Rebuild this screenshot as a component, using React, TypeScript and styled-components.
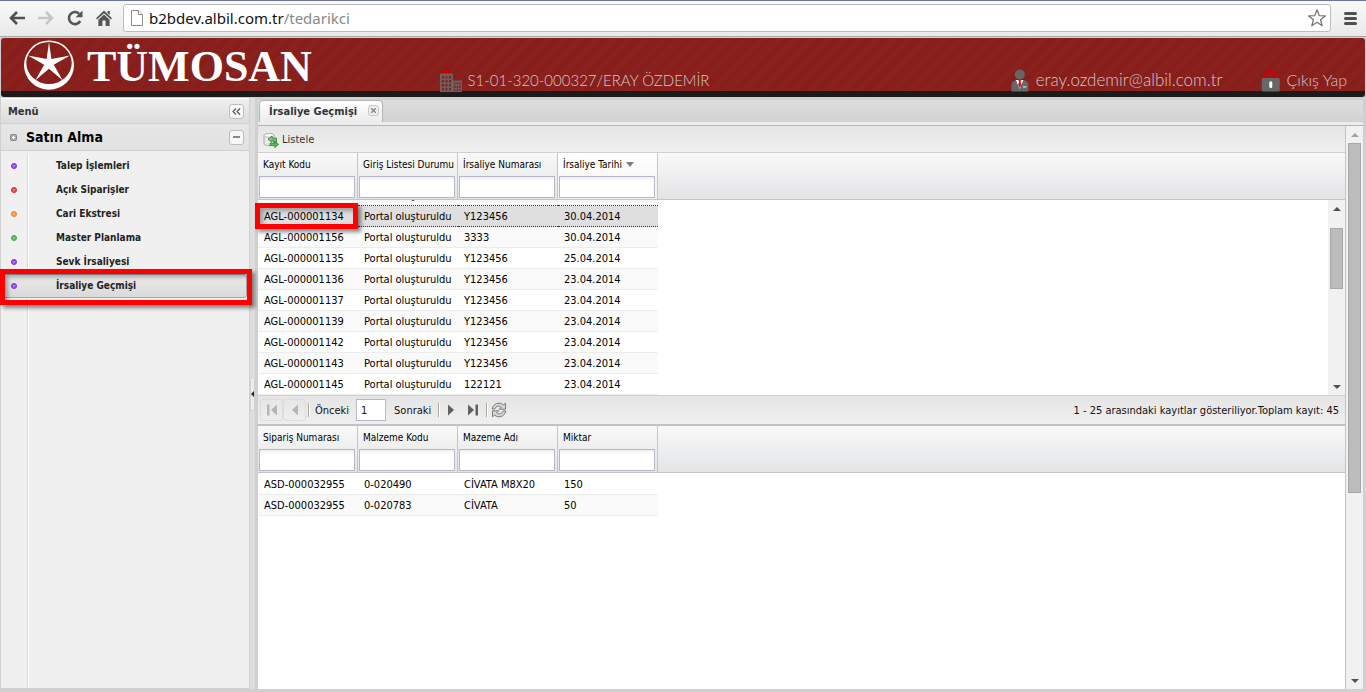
import React from "react";
import styled, { createGlobalStyle } from "styled-components";

const uiFont = `Tahoma, "DejaVu Sans Condensed", "DejaVu Sans", sans-serif`;

const GlobalStyle = createGlobalStyle`
  *, *::before, *::after { box-sizing: border-box; }
  html, body, #root { height: 100%; margin: 0; }
  body { background: #d0d0d0; color: #111; font: 11px/14px ${uiFont}; }
  button, input { font: inherit; color: inherit; margin: 0; padding: 0; }
  button { border: 0; background: none; }
  svg { display: block; flex: none; }
`;

const Page = styled.div`
  display: flex;
  flex-direction: column;
  min-height: 100%;
`;

/* Browser bar */
const BrowserBar = styled.div`
  display: flex;
  align-items: center;
  height: 37px;
  padding: 0 8px 1px;
  border-top: 1px solid #6a74a4;
  border-bottom: 1px solid #a9a9a9;
  background: linear-gradient(#f9f9f9, #e9e9e9);
`;

const NavButtons = styled.div`
  display: flex;
  gap: 11px;
  margin-right: 10px;
`;

const IconButton = styled.button`
  display: flex;
  align-items: center;
  justify-content: center;
`;

const AddressBox = styled.div`
  display: flex;
  flex: 1;
  align-items: center;
  gap: 5px;
  height: 28px;
  padding: 0 3px 0 6px;
  border: 1px solid #bcbcbc;
  border-radius: 3px;
  background: #fff;
`;

const Address = styled.div`
  flex: 1;
  color: #888;
  font: 15px/24px "Segoe UI", "Noto Sans", "Open Sans", sans-serif;
`;

const Host = styled.span`
  color: #111;
`;

const MenuButton = styled(IconButton)`
  margin-left: 13px;
`;

/* Banner */
const Banner = styled.header`
  display: grid;
  grid-template-columns: 32.5% 1fr auto;
  height: 59px;
  margin: 1px;
  padding: 0 18px 0 3px;
  border-bottom: 6px solid #1c1a1a;
  border-radius: 3px;
  background:
    repeating-linear-gradient(135deg, rgba(255, 255, 255, 0.04) 0 1px, transparent 1px 2px),
    #861b18;
`;

const Brand = styled.div`
  display: flex;
  align-items: center;
  gap: 12px;
  padding-left: 19px;
`;

const BrandName = styled.div`
  padding-top: 4px;
  color: #fff;
  font: bold 44px/50px "Liberation Serif", "Times New Roman", serif;
`;

const BannerGroup = styled.div`
  display: flex;
  align-items: flex-end;
  gap: 38px;
`;

const BannerItem = styled.div<{ $size: number }>`
  display: flex;
  align-items: flex-end;
  gap: 5px;
  color: #d3c6c4;
  font: 300 ${(p) => p.$size}px/24px "Century Gothic", Lato, sans-serif;
  white-space: nowrap;
`;

const BannerLink = styled.a`
  display: flex;
  align-items: flex-end;
  gap: 6px;
  color: #d3c6c4;
  font: 300 16px/24px "Century Gothic", Lato, sans-serif;
  text-decoration: none;
  white-space: nowrap;
`;

/* Work area */
const Workspace = styled.div`
  display: flex;
  flex: 1;
  padding: 0 3px 3px 0;
`;

const Sidebar = styled.aside`
  display: flex;
  flex: none;
  flex-direction: column;
  width: 250px;
  border: 1px solid #d0d0d0;
  border-top: 0;
  background: #f0f0f0;
`;

const SideHeader = styled.div`
  display: flex;
  align-items: center;
  justify-content: space-between;
  height: 26px;
  padding: 1px 5px 0 7px;
  border-top: 1px solid #fff;
  border-bottom: 1px solid #d0d0d0;
  background: linear-gradient(#efefef, #dcdcdc);
  color: #333;
  font-weight: bold;
`;

const SideGroup = styled.div`
  display: flex;
  align-items: center;
  height: 27px;
  padding: 0 5px 0 9px;
  border-bottom: 1px solid #d0d0d0;
  background: linear-gradient(#e6e6e6, #e2e2e2);
`;

const GroupTitle = styled.div`
  flex: 1;
  padding-left: 9px;
  color: #000;
  font: bold 14px/18px ${uiFont};
`;

const ToolButton = styled.button`
  display: flex;
  align-items: center;
  justify-content: center;
  width: 15px;
  height: 15px;
  border: 1px solid #bdbdbd;
  border-radius: 3px;
  background: #f7f7f7;
`;

const SideMenu = styled.nav`
  flex: 1;
  margin-top: 3px;
  background: linear-gradient(90deg, transparent 26px, #dcdcdc 26px 27px, #fff 27px 28px, transparent 28px);
`;

const SideLink = styled.a<{ $selected?: boolean }>`
  position: relative;
  display: flex;
  align-items: center;
  gap: 39px;
  height: 24px;
  margin: 0 2px;
  padding-left: 7px;
  border: 1px solid ${(p) => (p.$selected ? "#a8a8a8" : "transparent")};
  border-radius: 3px;
  background: ${(p) => (p.$selected ? "linear-gradient(#eaeaea, #dadada)" : "none")};
  color: #222;
  font: bold 10px/14px ${uiFont};
  text-decoration: none;
`;

const Bullet = styled.span<{ $color: string }>`
  width: 6px;
  height: 6px;
  border: 1px solid ${(p) => p.$color};
  border-radius: 3px;
  background: radial-gradient(#ffffff70, transparent), ${(p) => p.$color};
`;

/* Red annotation frames lie over the page */
const Highlight = styled.div`
  position: absolute;
  z-index: 2;
  border: 5px solid #fe0000;
  box-shadow: 3px 3px 4px rgba(0, 0, 0, 0.45), inset 3px 3px 4px rgba(0, 0, 0, 0.3);
  pointer-events: none;
`;

const MenuHighlight = styled(Highlight)`
  inset: -6px -6px -8px -4px;
`;

const CellHighlight = styled(Highlight)`
  top: 3px;
  left: -3px;
  width: 103px;
  height: 26px;
`;

const Splitter = styled.div`
  display: flex;
  flex: none;
  align-items: center;
  width: 5px;
  background: #dedede;
`;

const SplitterHandle = styled.button`
  display: flex;
  align-items: center;
  justify-content: center;
  width: 5px;
  height: 34px;
  border: 1px solid #d0d0d0;
  border-radius: 3px;
  background: #ececec;
`;

const MainPanel = styled.main`
  display: flex;
  flex: 1;
  flex-direction: column;
  min-width: 0;
  border-left: 3px solid #d0d0d0;
`;

const TabStrip = styled.div`
  display: flex;
  align-items: flex-end;
  height: 25px;
  margin-top: 2px;
  padding-left: 1px;
  border-bottom: 3px solid #ececec;
  background: linear-gradient(#dedede, #d2d2d2);
`;

const Tab = styled.div`
  display: flex;
  align-items: center;
  gap: 11px;
  height: 22px;
  padding: 1px 3px 0 9px;
  border: 1px solid #b5b5b5;
  border-bottom: 0;
  border-radius: 4px 4px 0 0;
  background: linear-gradient(#fff, #ececec);
  color: #333;
  font-weight: bold;
`;

const CloseTab = styled.button`
  display: flex;
  align-items: center;
  justify-content: center;
  width: 11px;
  height: 11px;
  margin-bottom: 4px;
  border: 1px solid #c8c8c8;
  border-radius: 3px;
  background: #eee;
`;

const Content = styled.div`
  display: flex;
  flex: 1;
  border-top: 1px solid #bdb1b3;
  background: #fff;
`;

const GridColumn = styled.div`
  display: flex;
  flex: 1;
  flex-direction: column;
  min-width: 0;
  border-right: 1px solid #c8c2c3;
`;

const Toolbar = styled.div`
  display: flex;
  align-items: center;
  height: 27px;
  padding: 1px 0 0 5px;
  border-bottom: 1px solid #d0d0d0;
  background: linear-gradient(#e5e5e5, #efefef);
`;

const ToolbarButton = styled.button`
  display: flex;
  align-items: center;
  gap: 3px;
  color: #333;
`;

const HeaderBand = styled.div`
  height: 47px;
  border-bottom: 1px solid #c5c5c5;
  background: linear-gradient(#f9f9f9, #e3e4e6);
`;

const DataTable = styled.table`
  width: 400px;
  flex: none;
  border-collapse: separate;
  border-spacing: 0;
  table-layout: fixed;
`;

const HeadCell = styled.th<{ $sorted?: boolean }>`
  height: 46px;
  padding: 0 2px 1px 1px;
  border-right: 1px solid #c5c5c5;
  background: ${(p) => (p.$sorted ? "linear-gradient(#fff, #f3f3f3)" : "none")};
  color: #000;
  font-weight: normal;
  text-align: left;
  vertical-align: top;
  white-space: nowrap;
`;

const HeadLabel = styled.div`
  display: flex;
  align-items: center;
  gap: 4px;
  height: 23px;
  padding-left: 4px;
  font-size: 10px;
`;

const FilterInput = styled.input`
  display: block;
  width: 100%;
  height: 22px;
  padding: 0 4px;
  border: 1px solid #b5b8c8;
  border-radius: 0;
  background: linear-gradient(#eee, #fff 4px);
`;

const GridBody = styled.div`
  position: relative;
  display: flex;
`;

const RowWindow = styled.div`
  display: flex;
  flex: 1;
  flex-direction: column;
  justify-content: flex-end;
  height: 195px;
  overflow: hidden;
`;

const DetailRows = styled.div`
  padding-top: 1px;
`;

const Row = styled.tr<{ $selected?: boolean; $alt?: boolean }>`
  background: ${(p) => (p.$selected ? "#dfdfdf" : p.$alt ? "#fafafa" : "#fff")};
  td {
    border-bottom: 1px ${(p) => (p.$selected ? "dotted #333" : "solid #ededed")};
  }
  &:has(+ tr[aria-selected="true"]) td {
    border-bottom: 1px dotted #333;
  }
`;

const Cell = styled.td`
  height: 21px;
  padding: 2px 0 0 6px;
  overflow: hidden;
  color: #000;
  white-space: nowrap;
`;

const Pager = styled.div`
  display: flex;
  align-items: center;
  height: 31px;
  padding: 0 6px 0 2px;
  border-top: 1px solid #d0d0d0;
  border-bottom: 2px solid #c9bfc1;
  background: linear-gradient(#e5e5e5, #efefef);
`;

const PageButton = styled.button`
  display: flex;
  align-items: center;
  justify-content: center;
  width: 22px;
  height: 22px;
  border: 1px solid transparent;
  border-radius: 3px;

  &:disabled {
    width: 23px;
    border-color: #dcdcdc;
  }
`;

const Separator = styled.span`
  width: 2px;
  height: 14px;
  margin-left: 2px;
  border-left: 1px solid #aca899;
  border-right: 1px solid #fff;
`;

const PageInput = styled.input`
  width: 30px;
  height: 22px;
  margin: 0 3px 0 2px;
  padding: 0 4px;
  border: 1px solid #b5b8c8;
  background: #fff;
`;

const PagerText = styled.label`
  padding: 2px 5px 0;
`;

const PagerInfo = styled.div`
  flex: 1;
  padding-top: 2px;
  text-align: right;
`;

/* Scroll bars */
const ScrollTrack = styled.div`
  display: flex;
  flex: none;
  flex-direction: column;
  width: 17px;
  background: #f1f1f1;
`;

const ScrollButton = styled.button`
  display: flex;
  align-items: center;
  justify-content: center;
  height: 17px;
`;

const Gap = styled.div<{ $share: number }>`
  flex: ${(p) => p.$share} 1 0;
`;

const Thumb = styled.div<{ $share: number }>`
  flex: ${(p) => p.$share} 1 0;
  margin: 0 2px;
  border: 1px solid #a8a8a8;
  background: #bcbcbc;
`;

type ScrollProps = { before: number; size: number; after: number; atTop?: boolean };

function ScrollBar({ before, size, after, atTop }: ScrollProps) {
  return (
    <ScrollTrack>
      <ScrollButton aria-label="Yukarı kaydır">
        <svg width="8" height="4" viewBox="0 0 8 4">
          <path d="M0 4L4 0L8 4Z" fill={atTop ? "#a3a3a3" : "#505050"} />
        </svg>
      </ScrollButton>
      <Gap $share={before} />
      <Thumb $share={size} />
      <Gap $share={after} />
      <ScrollButton aria-label="Aşağı kaydır">
        <svg width="8" height="4" viewBox="0 0 8 4">
          <path d="M0 0L4 4L8 0Z" fill="#505050" />
        </svg>
      </ScrollButton>
    </ScrollTrack>
  );
}

/* Drawings */
const BackIcon = ({ color }: { color: string }) => (
  <svg width="18" height="18" viewBox="0 0 18 18" fill="none" stroke={color} strokeWidth="2.6">
    <path d="M17 9H4M9 3L3 9L9 15" />
  </svg>
);

const ForwardIcon = () => (
  <svg width="18" height="18" viewBox="0 0 18 18" fill="none" stroke="#c6c6c6" strokeWidth="2.6">
    <path d="M1 9H14M9 3L15 9L9 15" />
  </svg>
);

const ReloadIcon = () => (
  <svg width="18" height="18" viewBox="0 0 18 18">
    <path d="M14.2 12A6 6 0 1 1 13.2 4.8" fill="none" stroke="#555" strokeWidth="2.6" />
    <path d="M16.5 1.5V8.2H9.6Z" fill="#555" />
  </svg>
);

const HomeIcon = () => (
  <svg width="18" height="18" viewBox="0 0 18 18" fill="#555">
    <path d="M9 1.5L17 9.3L15.9 10.6L9 4.2L2.1 10.6L1 9.3Z" />
    <path d="M12.5 2H14.8V6L12.5 4Z" />
    <path d="M9 5.5L14.6 10.7V17H10.6V11.5H7.4V17H3.4V10.7Z" />
  </svg>
);

const PageIcon = () => (
  <svg width="14" height="18" viewBox="0 0 14 18" fill="#fff" stroke="#8c8c8c">
    <path d="M1.5 1.5H8.5L12.5 5.5V16.5H1.5Z" />
    <path d="M8.5 1.5V5.5H12.5" />
  </svg>
);

const StarIcon = () => (
  <svg width="20" height="20" viewBox="0 0 20 20" fill="#fff" stroke="#777" strokeWidth="1.3" strokeLinejoin="round">
    <path d="M10 1.8L12.2 7.6L18.3 7.9L13.5 11.7L15.2 17.7L10 14.3L4.8 17.7L6.5 11.7L1.7 7.9L7.8 7.6Z" />
  </svg>
);

const BurgerIcon = () => (
  <svg width="14" height="13" viewBox="0 0 14 13" stroke="#505050" strokeWidth="3" strokeLinecap="round">
    <path d="M1.5 1.5H11.5M1.5 6.5H11.5M1.5 11.5H11.5" />
  </svg>
);

const LogoMark = () => (
  <svg width="52" height="52" viewBox="0 0 52 52">
    <path
      fill="#fff"
      fillRule="evenodd"
      d="M26 1.5A25 24.6 0 1 1 26 50.7A25 24.6 0 1 1 26 1.5ZM26 3A22.7 21 0 1 0 26 45A22.7 21 0 1 0 26 3Z"
    />
    <path
      fill="#fff"
      d="M26 3L28.4 20L47 16.5L30.8 25.8L39.8 41.5L26 29.8L12.2 41.5L21.2 25.8L5 16.5L23.6 20Z"
    />
  </svg>
);

const BuildingIcon = () => (
  <svg width="22" height="24" viewBox="0 0 22 24">
    <path d="M1.5 5L4 2.2L6.5 1L9 2.2L11.5 5Z" fill="#c20006" />
    <path
      fill="#686160"
      fillRule="evenodd"
      d="M0 5.5H13V12.5H22V24H0ZM2 8H4V10.5H2ZM5.5 8H7.5V10.5H5.5ZM9 8H11V10.5H9ZM2 12H4V14.5H2ZM5.5 12H7.5V14.5H5.5ZM9 12H11V14.5H9ZM2 16H4V18.5H2ZM5.5 16H7.5V18.5H5.5ZM9 16H11V18.5H9ZM2 20H4V22.5H2ZM5.5 20H7.5V22.5H5.5ZM9 20H11V22.5H9ZM14 14.5H15.5V16.5H14ZM16.7 14.5H18.2V16.5H16.7ZM19.4 14.5H20.9V16.5H19.4ZM14 18H15.5V20H14ZM16.7 18H18.2V20H16.7ZM19.4 18H20.9V20H19.4ZM14 21.3H15.5V23H14ZM16.7 21.3H18.2V23H16.7ZM19.4 21.3H20.9V23H19.4Z"
    />
  </svg>
);

const UserIcon = () => (
  <svg width="20" height="23" viewBox="0 0 20 23">
    <circle cx="8.8" cy="5.5" r="5" fill="#676767" />
    <path d="M0.5 22.5V16C0.5 12.5 3 11.5 5.5 11H12C15 11.5 17.3 12.5 17.3 16V22.5Z" fill="#676767" />
    <path d="M4.8 11H12.4L8.7 20Z" fill="#fff" />
    <path d="M7.5 11H10L9.6 13L10.4 16L8.7 19L7.2 16L8 13Z" fill="#e30613" />
    <path d="M12 17.3H15.5V18.5H12Z" fill="#ddd" />
  </svg>
);

const LockIcon = () => (
  <svg width="20" height="23" viewBox="0 0 20 23">
    <path d="M4.7 9V7A5.1 5 0 0 1 14.9 7V9" fill="none" stroke="#cc0008" strokeWidth="3" />
    <rect x="0.8" y="9" width="18" height="13.6" rx="1.5" fill="#676767" />
    <rect x="8.3" y="12.3" width="3" height="6.6" rx="1.5" fill="#fff" />
  </svg>
);

const ListIcon = () => (
  <svg width="16" height="16" viewBox="0 0 16 16">
    <path d="M1 3.5C1 1 11 1 11 3.5V12C11 14 1 14 1 12Z" fill="#e9e9e9" stroke="#aaa" />
    <ellipse cx="6" cy="3.4" rx="4.7" ry="1.9" fill="#fff" stroke="#b5b5b5" />
    <path d="M5 7.2L9 4V6H13.5V11H11V8.4H9V10.4Z" fill="#7cc77a" stroke="#2c8431" strokeWidth="0.8" />
    <path d="M15.6 12.4L11.8 9.4V11.3H7V13.6H11.8V15.6Z" fill="#5cb85a" stroke="#2c8431" strokeWidth="0.8" />
  </svg>
);

const EdgeArrow = ({ color, flip, bar }: { color: string; flip?: boolean; bar?: boolean }) => (
  <svg width="12" height="12" viewBox="0 0 12 12" fill={color}>
    <g transform={flip ? "scale(-1 1) translate(-12 0)" : undefined}>
      <path d={bar ? "M1 0.5L7 6L1 11.5Z" : "M3 0.5L9 6L3 11.5Z"} />
      {bar && <path d="M8.5 0.5H11V11.5H8.5Z" />}
    </g>
  </svg>
);

const RefreshIcon = () => (
  <svg width="16" height="16" viewBox="0 0 16 16" fill="#d8d8d8" stroke="#6e6e6e" strokeWidth="0.9">
    <path d="M1.3 7C2 1.5 8.5 -0.6 12.4 3L14.5 1.2V7.2H8.3L10.4 5.1C7.8 3.2 4.8 4.2 3.8 7Z" />
    <path d="M14.7 9C14 14.5 7.5 16.6 3.6 13L1.5 14.8V8.8H7.7L5.6 10.9C8.2 12.8 11.2 11.8 12.2 9Z" />
  </svg>
);

/* Data */
const menuItems = [
  { label: "Talep İşlemleri", color: "#8a2be2" },
  { label: "Açık Siparişler", color: "#dc2f36" },
  { label: "Cari Ekstresi", color: "#f0862a" },
  { label: "Master Planlama", color: "#4ca64c" },
  { label: "Sevk İrsaliyesi", color: "#8a2be2" },
  { label: "İrsaliye Geçmişi", color: "#8a2be2", selected: true },
];

const noteColumns = ["Kayıt Kodu", "Giriş Listesi Durumu", "İrsaliye Numarası", "İrsaliye Tarihi"];
const itemColumns = ["Sipariş Numarası", "Malzeme Kodu", "Mazeme Adı", "Miktar"];

const created = "Portal oluşturuldu";
const notes = [
  ["", created, "", ""],
  ["AGL-000001134", created, "Y123456", "30.04.2014"],
  ["AGL-000001156", created, "3333", "30.04.2014"],
  ["AGL-000001135", created, "Y123456", "25.04.2014"],
  ["AGL-000001136", created, "Y123456", "23.04.2014"],
  ["AGL-000001137", created, "Y123456", "23.04.2014"],
  ["AGL-000001139", created, "Y123456", "23.04.2014"],
  ["AGL-000001142", created, "Y123456", "23.04.2014"],
  ["AGL-000001143", created, "Y123456", "23.04.2014"],
  ["AGL-000001145", created, "122121", "23.04.2014"],
];

const items = [
  ["ASD-000032955", "0-020490", "CİVATA M8X20", "150"],
  ["ASD-000032955", "0-020783", "CİVATA", "50"],
];

function GridHeader({ columns, sorted }: { columns: string[]; sorted?: string }) {
  return (
    <HeaderBand>
      <DataTable>
        <thead>
          <tr>
            {columns.map((c) => (
              <HeadCell key={c} $sorted={c === sorted}>
                <HeadLabel>
                  {c}
                  {c === sorted && (
                    <svg width="8" height="5" viewBox="0 0 8 5">
                      <path d="M0 0H8L4 5Z" fill="#808080" />
                    </svg>
                  )}
                </HeadLabel>
                <FilterInput type="text" aria-label={c} />
              </HeadCell>
            ))}
          </tr>
        </thead>
      </DataTable>
    </HeaderBand>
  );
}

function GridRows({ rows, selected }: { rows: string[][]; selected?: string }) {
  return (
    <DataTable>
      <tbody>
        {rows.map((r, i) => (
          <Row key={i} $alt={i % 2 === (selected ? 0 : 1)} $selected={r[0] === selected} aria-selected={r[0] === selected}>
            {r.map((v, j) => (
              <Cell key={j}>{v}</Cell>
            ))}
          </Row>
        ))}
      </tbody>
    </DataTable>
  );
}

export default function App() {
  return (
    <Page>
      <GlobalStyle />
      <BrowserBar>
        <NavButtons>
          <IconButton aria-label="Geri"><BackIcon color="#505050" /></IconButton>
          <IconButton aria-label="İleri"><ForwardIcon /></IconButton>
          <IconButton aria-label="Yenile"><ReloadIcon /></IconButton>
          <IconButton aria-label="Ana sayfa"><HomeIcon /></IconButton>
        </NavButtons>
        <AddressBox>
          <PageIcon />
          <Address><Host>b2bdev.albil.com.tr</Host>/tedarikci</Address>
          <IconButton aria-label="Yer işareti"><StarIcon /></IconButton>
        </AddressBox>
        <MenuButton aria-label="Tarayıcı menüsü"><BurgerIcon /></MenuButton>
      </BrowserBar>

      <Banner>
        <Brand>
          <LogoMark />
          <BrandName>TÜMOSAN</BrandName>
        </Brand>
        <BannerGroup>
          <BannerItem $size={15}>
            <BuildingIcon />
            S1-01-320-000327/ERAY ÖZDEMİR
          </BannerItem>
        </BannerGroup>
        <BannerGroup>
          <BannerItem $size={17}>
            <UserIcon />
            eray.ozdemir@albil.com.tr
          </BannerItem>
          <BannerLink href="#cikis">
            <LockIcon />
            Çıkış Yap
          </BannerLink>
        </BannerGroup>
      </Banner>

      <Workspace>
        <Sidebar>
          <SideHeader>
            Menü
            <ToolButton aria-label="Menüyü daralt">
              <svg width="9" height="7" viewBox="0 0 9 7" fill="none" stroke="#555" strokeWidth="1.2">
                <path d="M4 0.5L1 3.5L4 6.5M8 0.5L5 3.5L8 6.5" />
              </svg>
            </ToolButton>
          </SideHeader>
          <SideGroup>
            <svg width="7" height="7" viewBox="0 0 7 7">
              <rect x="0.5" y="0.5" width="6" height="6" rx="1" fill="#aaa" stroke="#888" />
              <path d="M3.5 2V5M2 3.5H5" stroke="#fff" />
            </svg>
            <GroupTitle>Satın Alma</GroupTitle>
            <ToolButton aria-label="Grubu kapat">
              <svg width="7" height="2" viewBox="0 0 7 2"><path d="M0 0H7V2H0Z" fill="#888" /></svg>
            </ToolButton>
          </SideGroup>
          <SideMenu>
            {menuItems.map((m) => (
              <SideLink key={m.label} href="#" $selected={m.selected}>
                <Bullet $color={m.color} />
                {m.label}
                {m.selected && <MenuHighlight />}
              </SideLink>
            ))}
          </SideMenu>
        </Sidebar>

        <Splitter>
          <SplitterHandle aria-label="Paneli daralt">
            <svg width="3" height="6" viewBox="0 0 3 6"><path d="M3 0V6L0 3Z" fill="#222" /></svg>
          </SplitterHandle>
        </Splitter>

        <MainPanel>
          <TabStrip>
            <Tab>
              İrsaliye Geçmişi
              <CloseTab aria-label="Sekmeyi kapat">
                <svg width="5" height="5" viewBox="0 0 5 5" stroke="#888" strokeWidth="1.4">
                  <path d="M0 0L5 5M5 0L0 5" />
                </svg>
              </CloseTab>
            </Tab>
          </TabStrip>
          <Content>
            <GridColumn>
              <Toolbar>
                <ToolbarButton>
                  <ListIcon />
                  Listele
                </ToolbarButton>
              </Toolbar>
              <GridHeader columns={noteColumns} sorted="İrsaliye Tarihi" />
              <GridBody>
                <RowWindow>
                  <GridRows rows={notes} selected="AGL-000001134" />
                </RowWindow>
                <ScrollBar before={7} size={37} after={56} />
                <CellHighlight />
              </GridBody>
              <Pager>
                <PageButton disabled aria-label="İlk sayfa"><EdgeArrow color="#b5b5b5" flip bar /></PageButton>
                <PageButton disabled aria-label="Önceki sayfa"><EdgeArrow color="#b5b5b5" flip /></PageButton>
                <Separator />
                <PagerText htmlFor="page">Önceki</PagerText>
                <PageInput id="page" type="text" defaultValue="1" />
                <PagerText htmlFor="page">Sonraki</PagerText>
                <Separator />
                <PageButton aria-label="Sonraki sayfa"><EdgeArrow color="#606060" /></PageButton>
                <PageButton aria-label="Son sayfa"><EdgeArrow color="#606060" bar /></PageButton>
                <Separator />
                <PageButton aria-label="Listeyi yenile"><RefreshIcon /></PageButton>
                <PagerInfo>1 - 25 arasındaki kayıtlar gösteriliyor.Toplam kayıt: 45</PagerInfo>
              </Pager>
              <GridHeader columns={itemColumns} />
              <DetailRows>
                <GridRows rows={items} />
              </DetailRows>
            </GridColumn>
            <ScrollBar before={0} size={66} after={34} atTop />
          </Content>
        </MainPanel>
      </Workspace>
    </Page>
  );
}
